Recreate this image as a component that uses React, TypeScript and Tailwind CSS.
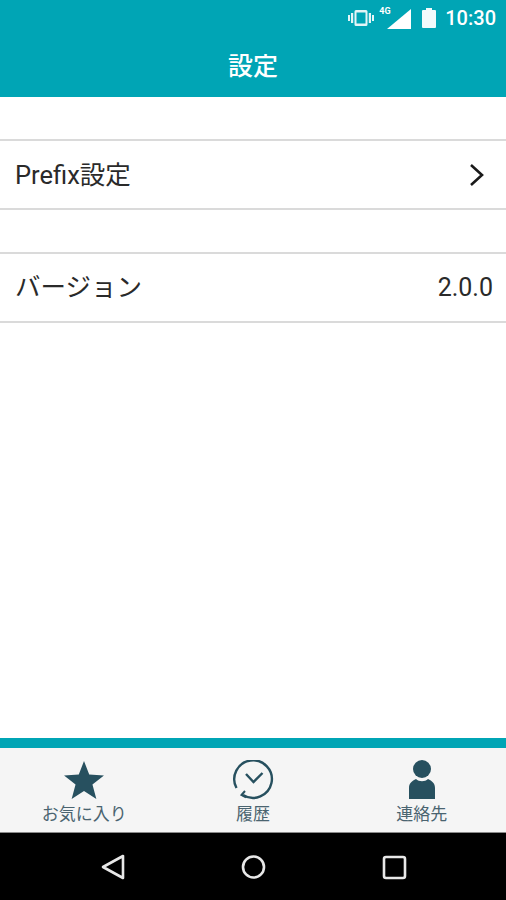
const font = "font-['Roboto','Noto_Sans_CJK_JP',sans-serif]";

function StatusBar() {
  return (
    <div className="flex h-[35px] items-center justify-end pr-[10px] text-white">
      {/* vibrate */}
      <svg width="26" height="18" viewBox="0 0 26 18" className="mr-[8px] mt-[1px] text-[#e4f5f7]" fill="currentColor">
        <path d="M0 6h2v6H0zM3 4h2.2v10H3zM20.8 4H23v10h-2.2zM24 6h2v6h-2z" />
        <path fillRule="evenodd" d="M8 1h10a1.5 1.5 0 0 1 1.500 1.500v13A1.500 1.500 0 0 1 18 17H8a1.500 1.500 0 0 1-1.500-1.500v-13A1.500 1.500 0 0 1 8 1zm.5 2.500v11h9v-11z" />
      </svg>
      <div className="relative mr-[11px] mt-[1px] h-[22px] w-[29px]">
        <span className="absolute left-[-3px] top-[-2px] text-[9px] font-bold leading-[12px]">4G</span>
        <svg width="24" height="20" viewBox="0 0 24 20" className="absolute bottom-0 right-0" fill="currentColor">
          <path d="M24 0v20H0z" />
        </svg>
      </div>
      <div className="mr-[9px] mt-[1px] flex flex-col items-center">
        <div className="h-[2px] w-[6px] bg-[#f1fafb]" />
        <div className="h-[18px] w-[14px] rounded-[1px] bg-[#f1fafb]" />
      </div>
      <span className={`${font} text-[20px] font-medium leading-none`}>10:30</span>
    </div>
  );
}

function TabItem({ label, icon }: { label: string; icon: React.ReactNode }) {
  return (
    <div className="flex w-[169px] flex-col items-center pt-[11px]">
      <div className="flex h-[42px] items-center justify-center">{icon}</div>
      <span className="mt-[3px] text-[17px] leading-[20px] text-[#4a6470]">{label}</span>
    </div>
  );
}

export default function App() {
  return (
    <div className={`${font} flex h-[900px] w-[506px] flex-col bg-white`}>
      <header className="h-[97px] bg-[#00a5b5]">
        <StatusBar />
        <h1 className="mt-[17px] text-center text-[25px] font-medium leading-[30px] text-white">設定</h1>
      </header>

      <main className="flex-1 pt-[42px]">
        <div className="flex h-[71px] items-center justify-between border-y-2 border-[#dadada] pl-[15px] pr-[21px] text-[25.5px] text-[#2a2a2a]">
          <span className="mt-[2px]">Prefix設定</span>
          <svg width="16" height="24" viewBox="0 0 16 24" fill="none" stroke="#1a1a1a" strokeWidth="2.6">
            <path d="M2 2l11 10L2 22" />
          </svg>
        </div>
        <div className="mt-[42px] flex h-[71px] items-center justify-between border-y-2 border-[#dadada] pl-[15px] pr-[13px] text-[25.5px] text-[#2a2a2a]">
          <span>バージョン</span>
          <span className="text-[25px]">2.0.0</span>
        </div>
      </main>

      <div className="h-[10px] bg-[#00a5b5]" />
      <nav className="flex h-[85px] justify-between border-b border-[#8a8a8a] bg-[#f5f5f5]">
        <TabItem
          label="お気に入り"
          icon={
            <svg width="40" height="38" viewBox="0 0 42 40" fill="#27505f">
              <path d="M21 0l5.500 14.300L42 15.200 29.900 24.800 34 40 21 31.500 8 40l4.100-15.200L0 15.200l15.500-.9z" />
            </svg>
          }
        />
        <TabItem
          label="履歴"
          icon={
            <svg width="42" height="40" viewBox="0 0 42 40" fill="none" stroke="#27505f" strokeWidth="2.4">
              <path d="M4.500 28A18.800 18.800 0 1 1 11 35" />
              <path d="M13 31l-3.500 4 4.500 2.500" strokeWidth="2" />
              <path d="M14 14l7.500 8 9-9" strokeWidth="2.400" />
            </svg>
          }
        />
        <TabItem
          label="連絡先"
          icon={
            <svg width="28" height="40" viewBox="0 0 28 40" fill="#27505f">
              <circle cx="14" cy="9" r="9" />
              <path d="M1 39V28c0-5 3-7 7-9 3 3 9 3 12 0 4 2 7 4 7 9v11z" />
            </svg>
          }
        />
      </nav>

      <div className="flex h-[67px] items-center bg-black">
        <svg width="506" height="28" viewBox="0 0 506 28" fill="none" stroke="#e8e8e8" strokeWidth="2.600">
          <path d="M123 3v22L103 14z" strokeLinejoin="round" />
          <circle cx="253.500" cy="14" r="10.500" />
          <rect x="384" y="4" width="21" height="21" rx="2" />
        </svg>
      </div>
    </div>
  );
}
